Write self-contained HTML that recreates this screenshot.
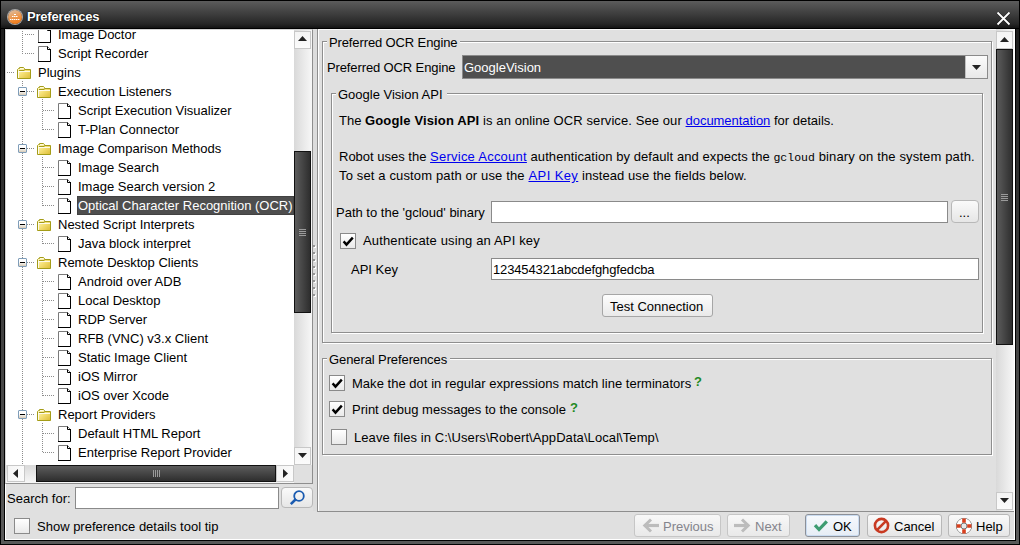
<!DOCTYPE html><html><head><meta charset="utf-8"><title>Preferences</title><style>
*{margin:0;padding:0;box-sizing:border-box}
html,body{width:1020px;height:545px;overflow:hidden;background:#000}
body{position:relative;font-family:"Liberation Sans",sans-serif;font-size:13px;color:#000}
div{position:absolute}
.t{white-space:nowrap;line-height:15px}
.dv{width:1px;background:repeating-linear-gradient(to bottom,#8c8c8c 0 1px,transparent 1px 2px)}
.dh{height:1px;background:repeating-linear-gradient(to right,#8c8c8c 0 1px,transparent 1px 2px)}
.etch{border:1px solid #8e8e8e;box-shadow:inset 1px 1px 0 #fff,1px 1px 0 #fff}
.btn{border:1px solid #a6a6a6;border-radius:3px;background:linear-gradient(#fdfdfd,#e9e9e9)}
.tf{border:1px solid #8a8a8a;background:#fff;box-shadow:inset 1px 1px 0 #f0f0f0}
.cb{width:16px;height:16px;border:1px solid #8a8a8a;background:linear-gradient(#fff,#e8e8e8)}
.sbbtn{border:1px solid #c4c4c4;background:linear-gradient(to right,#f0f0f0,#fafafa)}
.thumbv{border:1px solid #111;background:linear-gradient(to right,#5e5e5e,#2e2e2e)}
.thumbh{border:1px solid #111;background:linear-gradient(to bottom,#5e5e5e,#2e2e2e)}
.trackv{background:linear-gradient(to right,#d9d9d9,#f7f7f7)}
.trackh{background:linear-gradient(to bottom,#d9d9d9,#f7f7f7)}
a{color:#0000ee;text-decoration:underline}
</style></head><body>
<div style="left:1px;top:1px;width:1018px;height:27px;background:linear-gradient(#5c5c5c,#262626 85%,#141414)"></div>
<div style="left:1px;top:29px;width:3px;height:515px;background:linear-gradient(#1e1e1e,#5a5a5a)"></div>
<div style="left:1016px;top:29px;width:3px;height:515px;background:linear-gradient(#1e1e1e,#5a5a5a)"></div>
<div style="left:4px;top:541px;width:1012px;height:3px;background:#585858"></div>
<div style="left:5px;top:29px;width:1010px;height:511px;background:#e0e0e0;border-left:1px solid #fff;border-bottom:1px solid #fff;border-right:1px solid #fff"></div>
<div style="left:8px;top:10px;width:14px;height:14px;border-radius:50%;background:linear-gradient(160deg,#d9c4b0 0%,#e9a060 40%,#f08428 75%,#f07a18);box-shadow:0 0 0 1px #a8a8a8"></div>
<div style="left:14px;top:14px;width:2px;height:1px;background:#fff"></div>
<div style="left:12px;top:16px;width:6px;height:1px;background:repeating-linear-gradient(to right,#fff 0 1px,rgba(255,255,255,.5) 1px 2px)"></div>
<div style="left:10px;top:19px;width:10px;height:1px;background:repeating-linear-gradient(to right,#fff 0 1px,rgba(255,255,255,.4) 1px 2px)"></div>
<div class="t" style="left:27px;top:9px;line-height:15px;color:#fff;font-weight:bold;font-size:13px;letter-spacing:-0.2px;text-shadow:0 0 1px #000,0 0 2px #000">Preferences</div>
<svg style="position:absolute;left:996px;top:10.5px" width="15" height="15" viewBox="0 0 15 15"><path d="M1.5 1.5L13.5 13.5M13.5 1.5L1.5 13.5" stroke="#000" stroke-width="3" opacity=".5"/><path d="M1.5 1.5L13.5 13.5M13.5 1.5L1.5 13.5" stroke="#fff" stroke-width="1.8"/></svg>
<div style="left:5px;top:29px;width:308px;height:455px;background:#fff;border-top:1px solid #d4d4d4;border-left:1px solid #d4d4d4;border-right:1px solid #8e8e8e;border-bottom:1px solid #8e8e8e"></div>
<div style="left:6px;top:30px;width:288px;height:435px;overflow:hidden"><div style="left:-6px;top:-30px;width:300px;height:500px"><div class="dv" style="left:22px;top:29px;height:25px"></div><div class="dv" style="left:22px;top:81px;height:385px"></div><div class="dv" style="left:42px;top:99px;height:31px"></div><div class="dv" style="left:42px;top:157px;height:49px"></div><div class="dv" style="left:42px;top:233px;height:11px"></div><div class="dv" style="left:42px;top:271px;height:125px"></div><div class="dv" style="left:42px;top:423px;height:30px"></div><div class="dh" style="left:25px;top:34px;width:10px"></div><svg style="position:absolute;left:38px;top:27px" width="13" height="16" viewBox="0 0 13 16"><path d="M0.5 15.5V0.5H9.5L12.5 3.5V15.5Z" fill="#fff" stroke="#7a7a7a"/><path d="M12.5 3V15.5H0" stroke="#000" fill="none"/><path d="M9.5 0.5V3.5H12.5" stroke="#000" fill="none"/></svg><div class="t" style="left:58px;top:27px;line-height:15px;">Image Doctor</div><div class="dh" style="left:25px;top:53px;width:10px"></div><svg style="position:absolute;left:38px;top:46px" width="13" height="16" viewBox="0 0 13 16"><path d="M0.5 15.5V0.5H9.5L12.5 3.5V15.5Z" fill="#fff" stroke="#7a7a7a"/><path d="M12.5 3V15.5H0" stroke="#000" fill="none"/><path d="M9.5 0.5V3.5H12.5" stroke="#000" fill="none"/></svg><div class="t" style="left:58px;top:46px;line-height:15px;">Script Recorder</div><div class="dh" style="left:7px;top:72px;width:8px"></div><svg style="position:absolute;left:17px;top:67px" width="14" height="12" viewBox="0 0 14 12"><defs><linearGradient id="fg" x1="0" y1="0" x2="1" y2="1"><stop offset="0" stop-color="#fffbd8"/><stop offset=".45" stop-color="#f6e27a"/><stop offset="1" stop-color="#dcbc34"/></linearGradient></defs><path d="M0.5 11.5V2.5L1.5 1.5H2.5V0.5H6.5L7.5 1.5V2.5H13.5V11.5Z" fill="url(#fg)" stroke="#a49c18"/><path d="M2 3.5H7.5" stroke="#a49c18"/><path d="M3 1.5H6.5" stroke="#fffce0"/><path d="M1.5 4.5V11M1 4.5H13" stroke="#fff" opacity=".85"/></svg><div class="t" style="left:38px;top:65px;line-height:15px;">Plugins</div><div class="dh" style="left:27px;top:91px;width:8px"></div><div style="left:18px;top:87px;width:9px;height:9px;border:1px solid #7f9db9;border-radius:1px;background:linear-gradient(#fff 40%,#d8ccb8)"></div><div style="left:20px;top:91px;width:5px;height:1px;background:#000"></div><svg style="position:absolute;left:37px;top:86px" width="14" height="12" viewBox="0 0 14 12"><defs><linearGradient id="fg" x1="0" y1="0" x2="1" y2="1"><stop offset="0" stop-color="#fffbd8"/><stop offset=".45" stop-color="#f6e27a"/><stop offset="1" stop-color="#dcbc34"/></linearGradient></defs><path d="M0.5 11.5V2.5L1.5 1.5H2.5V0.5H6.5L7.5 1.5V2.5H13.5V11.5Z" fill="url(#fg)" stroke="#a49c18"/><path d="M2 3.5H7.5" stroke="#a49c18"/><path d="M3 1.5H6.5" stroke="#fffce0"/><path d="M1.5 4.5V11M1 4.5H13" stroke="#fff" opacity=".85"/></svg><div class="t" style="left:58px;top:84px;line-height:15px;">Execution Listeners</div><div class="dh" style="left:43px;top:110px;width:12px"></div><svg style="position:absolute;left:58px;top:103px" width="13" height="16" viewBox="0 0 13 16"><path d="M0.5 15.5V0.5H9.5L12.5 3.5V15.5Z" fill="#fff" stroke="#7a7a7a"/><path d="M12.5 3V15.5H0" stroke="#000" fill="none"/><path d="M9.5 0.5V3.5H12.5" stroke="#000" fill="none"/></svg><div class="t" style="left:78px;top:103px;line-height:15px;">Script Execution Visualizer</div><div class="dh" style="left:43px;top:129px;width:12px"></div><svg style="position:absolute;left:58px;top:122px" width="13" height="16" viewBox="0 0 13 16"><path d="M0.5 15.5V0.5H9.5L12.5 3.5V15.5Z" fill="#fff" stroke="#7a7a7a"/><path d="M12.5 3V15.5H0" stroke="#000" fill="none"/><path d="M9.5 0.5V3.5H12.5" stroke="#000" fill="none"/></svg><div class="t" style="left:78px;top:122px;line-height:15px;">T-Plan Connector</div><div class="dh" style="left:27px;top:148px;width:8px"></div><div style="left:18px;top:144px;width:9px;height:9px;border:1px solid #7f9db9;border-radius:1px;background:linear-gradient(#fff 40%,#d8ccb8)"></div><div style="left:20px;top:148px;width:5px;height:1px;background:#000"></div><svg style="position:absolute;left:37px;top:143px" width="14" height="12" viewBox="0 0 14 12"><defs><linearGradient id="fg" x1="0" y1="0" x2="1" y2="1"><stop offset="0" stop-color="#fffbd8"/><stop offset=".45" stop-color="#f6e27a"/><stop offset="1" stop-color="#dcbc34"/></linearGradient></defs><path d="M0.5 11.5V2.5L1.5 1.5H2.5V0.5H6.5L7.5 1.5V2.5H13.5V11.5Z" fill="url(#fg)" stroke="#a49c18"/><path d="M2 3.5H7.5" stroke="#a49c18"/><path d="M3 1.5H6.5" stroke="#fffce0"/><path d="M1.5 4.5V11M1 4.5H13" stroke="#fff" opacity=".85"/></svg><div class="t" style="left:58px;top:141px;line-height:15px;">Image Comparison Methods</div><div class="dh" style="left:43px;top:167px;width:12px"></div><svg style="position:absolute;left:58px;top:160px" width="13" height="16" viewBox="0 0 13 16"><path d="M0.5 15.5V0.5H9.5L12.5 3.5V15.5Z" fill="#fff" stroke="#7a7a7a"/><path d="M12.5 3V15.5H0" stroke="#000" fill="none"/><path d="M9.5 0.5V3.5H12.5" stroke="#000" fill="none"/></svg><div class="t" style="left:78px;top:160px;line-height:15px;">Image Search</div><div class="dh" style="left:43px;top:186px;width:12px"></div><svg style="position:absolute;left:58px;top:179px" width="13" height="16" viewBox="0 0 13 16"><path d="M0.5 15.5V0.5H9.5L12.5 3.5V15.5Z" fill="#fff" stroke="#7a7a7a"/><path d="M12.5 3V15.5H0" stroke="#000" fill="none"/><path d="M9.5 0.5V3.5H12.5" stroke="#000" fill="none"/></svg><div class="t" style="left:78px;top:179px;line-height:15px;">Image Search version 2</div><div class="dh" style="left:43px;top:205px;width:12px"></div><svg style="position:absolute;left:58px;top:198px" width="13" height="16" viewBox="0 0 13 16"><path d="M0.5 15.5V0.5H9.5L12.5 3.5V15.5Z" fill="#fff" stroke="#7a7a7a"/><path d="M12.5 3V15.5H0" stroke="#000" fill="none"/><path d="M9.5 0.5V3.5H12.5" stroke="#000" fill="none"/></svg><div style="left:77px;top:196px;width:217px;height:19px;background:#4e4e4e;border:1px solid #424242"></div><div class="t" style="left:78px;top:198px;line-height:15px;color:#fff">Optical Character Recognition (OCR)</div><div class="dh" style="left:27px;top:224px;width:8px"></div><div style="left:18px;top:220px;width:9px;height:9px;border:1px solid #7f9db9;border-radius:1px;background:linear-gradient(#fff 40%,#d8ccb8)"></div><div style="left:20px;top:224px;width:5px;height:1px;background:#000"></div><svg style="position:absolute;left:37px;top:219px" width="14" height="12" viewBox="0 0 14 12"><defs><linearGradient id="fg" x1="0" y1="0" x2="1" y2="1"><stop offset="0" stop-color="#fffbd8"/><stop offset=".45" stop-color="#f6e27a"/><stop offset="1" stop-color="#dcbc34"/></linearGradient></defs><path d="M0.5 11.5V2.5L1.5 1.5H2.5V0.5H6.5L7.5 1.5V2.5H13.5V11.5Z" fill="url(#fg)" stroke="#a49c18"/><path d="M2 3.5H7.5" stroke="#a49c18"/><path d="M3 1.5H6.5" stroke="#fffce0"/><path d="M1.5 4.5V11M1 4.5H13" stroke="#fff" opacity=".85"/></svg><div class="t" style="left:58px;top:217px;line-height:15px;">Nested Script Interprets</div><div class="dh" style="left:43px;top:243px;width:12px"></div><svg style="position:absolute;left:58px;top:236px" width="13" height="16" viewBox="0 0 13 16"><path d="M0.5 15.5V0.5H9.5L12.5 3.5V15.5Z" fill="#fff" stroke="#7a7a7a"/><path d="M12.5 3V15.5H0" stroke="#000" fill="none"/><path d="M9.5 0.5V3.5H12.5" stroke="#000" fill="none"/></svg><div class="t" style="left:78px;top:236px;line-height:15px;">Java block interpret</div><div class="dh" style="left:27px;top:262px;width:8px"></div><div style="left:18px;top:258px;width:9px;height:9px;border:1px solid #7f9db9;border-radius:1px;background:linear-gradient(#fff 40%,#d8ccb8)"></div><div style="left:20px;top:262px;width:5px;height:1px;background:#000"></div><svg style="position:absolute;left:37px;top:257px" width="14" height="12" viewBox="0 0 14 12"><defs><linearGradient id="fg" x1="0" y1="0" x2="1" y2="1"><stop offset="0" stop-color="#fffbd8"/><stop offset=".45" stop-color="#f6e27a"/><stop offset="1" stop-color="#dcbc34"/></linearGradient></defs><path d="M0.5 11.5V2.5L1.5 1.5H2.5V0.5H6.5L7.5 1.5V2.5H13.5V11.5Z" fill="url(#fg)" stroke="#a49c18"/><path d="M2 3.5H7.5" stroke="#a49c18"/><path d="M3 1.5H6.5" stroke="#fffce0"/><path d="M1.5 4.5V11M1 4.5H13" stroke="#fff" opacity=".85"/></svg><div class="t" style="left:58px;top:255px;line-height:15px;">Remote Desktop Clients</div><div class="dh" style="left:43px;top:281px;width:12px"></div><svg style="position:absolute;left:58px;top:274px" width="13" height="16" viewBox="0 0 13 16"><path d="M0.5 15.5V0.5H9.5L12.5 3.5V15.5Z" fill="#fff" stroke="#7a7a7a"/><path d="M12.5 3V15.5H0" stroke="#000" fill="none"/><path d="M9.5 0.5V3.5H12.5" stroke="#000" fill="none"/></svg><div class="t" style="left:78px;top:274px;line-height:15px;">Android over ADB</div><div class="dh" style="left:43px;top:300px;width:12px"></div><svg style="position:absolute;left:58px;top:293px" width="13" height="16" viewBox="0 0 13 16"><path d="M0.5 15.5V0.5H9.5L12.5 3.5V15.5Z" fill="#fff" stroke="#7a7a7a"/><path d="M12.5 3V15.5H0" stroke="#000" fill="none"/><path d="M9.5 0.5V3.5H12.5" stroke="#000" fill="none"/></svg><div class="t" style="left:78px;top:293px;line-height:15px;">Local Desktop</div><div class="dh" style="left:43px;top:319px;width:12px"></div><svg style="position:absolute;left:58px;top:312px" width="13" height="16" viewBox="0 0 13 16"><path d="M0.5 15.5V0.5H9.5L12.5 3.5V15.5Z" fill="#fff" stroke="#7a7a7a"/><path d="M12.5 3V15.5H0" stroke="#000" fill="none"/><path d="M9.5 0.5V3.5H12.5" stroke="#000" fill="none"/></svg><div class="t" style="left:78px;top:312px;line-height:15px;">RDP Server</div><div class="dh" style="left:43px;top:338px;width:12px"></div><svg style="position:absolute;left:58px;top:331px" width="13" height="16" viewBox="0 0 13 16"><path d="M0.5 15.5V0.5H9.5L12.5 3.5V15.5Z" fill="#fff" stroke="#7a7a7a"/><path d="M12.5 3V15.5H0" stroke="#000" fill="none"/><path d="M9.5 0.5V3.5H12.5" stroke="#000" fill="none"/></svg><div class="t" style="left:78px;top:331px;line-height:15px;">RFB (VNC) v3.x Client</div><div class="dh" style="left:43px;top:357px;width:12px"></div><svg style="position:absolute;left:58px;top:350px" width="13" height="16" viewBox="0 0 13 16"><path d="M0.5 15.5V0.5H9.5L12.5 3.5V15.5Z" fill="#fff" stroke="#7a7a7a"/><path d="M12.5 3V15.5H0" stroke="#000" fill="none"/><path d="M9.5 0.5V3.5H12.5" stroke="#000" fill="none"/></svg><div class="t" style="left:78px;top:350px;line-height:15px;">Static Image Client</div><div class="dh" style="left:43px;top:376px;width:12px"></div><svg style="position:absolute;left:58px;top:369px" width="13" height="16" viewBox="0 0 13 16"><path d="M0.5 15.5V0.5H9.5L12.5 3.5V15.5Z" fill="#fff" stroke="#7a7a7a"/><path d="M12.5 3V15.5H0" stroke="#000" fill="none"/><path d="M9.5 0.5V3.5H12.5" stroke="#000" fill="none"/></svg><div class="t" style="left:78px;top:369px;line-height:15px;">iOS Mirror</div><div class="dh" style="left:43px;top:395px;width:12px"></div><svg style="position:absolute;left:58px;top:388px" width="13" height="16" viewBox="0 0 13 16"><path d="M0.5 15.5V0.5H9.5L12.5 3.5V15.5Z" fill="#fff" stroke="#7a7a7a"/><path d="M12.5 3V15.5H0" stroke="#000" fill="none"/><path d="M9.5 0.5V3.5H12.5" stroke="#000" fill="none"/></svg><div class="t" style="left:78px;top:388px;line-height:15px;">iOS over Xcode</div><div class="dh" style="left:27px;top:414px;width:8px"></div><div style="left:18px;top:410px;width:9px;height:9px;border:1px solid #7f9db9;border-radius:1px;background:linear-gradient(#fff 40%,#d8ccb8)"></div><div style="left:20px;top:414px;width:5px;height:1px;background:#000"></div><svg style="position:absolute;left:37px;top:409px" width="14" height="12" viewBox="0 0 14 12"><defs><linearGradient id="fg" x1="0" y1="0" x2="1" y2="1"><stop offset="0" stop-color="#fffbd8"/><stop offset=".45" stop-color="#f6e27a"/><stop offset="1" stop-color="#dcbc34"/></linearGradient></defs><path d="M0.5 11.5V2.5L1.5 1.5H2.5V0.5H6.5L7.5 1.5V2.5H13.5V11.5Z" fill="url(#fg)" stroke="#a49c18"/><path d="M2 3.5H7.5" stroke="#a49c18"/><path d="M3 1.5H6.5" stroke="#fffce0"/><path d="M1.5 4.5V11M1 4.5H13" stroke="#fff" opacity=".85"/></svg><div class="t" style="left:58px;top:407px;line-height:15px;">Report Providers</div><div class="dh" style="left:43px;top:433px;width:12px"></div><svg style="position:absolute;left:58px;top:426px" width="13" height="16" viewBox="0 0 13 16"><path d="M0.5 15.5V0.5H9.5L12.5 3.5V15.5Z" fill="#fff" stroke="#7a7a7a"/><path d="M12.5 3V15.5H0" stroke="#000" fill="none"/><path d="M9.5 0.5V3.5H12.5" stroke="#000" fill="none"/></svg><div class="t" style="left:78px;top:426px;line-height:15px;">Default HTML Report</div><div class="dh" style="left:43px;top:452px;width:12px"></div><svg style="position:absolute;left:58px;top:445px" width="13" height="16" viewBox="0 0 13 16"><path d="M0.5 15.5V0.5H9.5L12.5 3.5V15.5Z" fill="#fff" stroke="#7a7a7a"/><path d="M12.5 3V15.5H0" stroke="#000" fill="none"/><path d="M9.5 0.5V3.5H12.5" stroke="#000" fill="none"/></svg><div class="t" style="left:78px;top:445px;line-height:15px;">Enterprise Report Provider</div></div></div>
<div style="left:294px;top:30px;width:18px;height:435px;background:linear-gradient(to right,#d9d9d9,#f7f7f7)"></div>
<div style="left:294px;top:31px;width:17px;height:18px;border:1px solid #c8c8c8;background:linear-gradient(#f4f4f4,#fbfbfb)"></div>
<svg style="position:absolute;left:298px;top:36px" width="9" height="5"><path d="M0 5L4.5 0L9 5Z" fill="#222"/></svg>
<div style="left:294px;top:447px;width:17px;height:18px;border:1px solid #c8c8c8;background:linear-gradient(#f4f4f4,#fbfbfb)"></div>
<svg style="position:absolute;left:298px;top:453px" width="9" height="5"><path d="M0 0L4.5 5L9 0Z" fill="#222"/></svg>
<div style="left:294px;top:151px;width:17px;height:162px;border:1px solid #111;background:linear-gradient(to right,#5c5c5c,#2e2e2e)"></div>
<div style="left:299px;top:229px;width:7px;height:1px;background:#9a9a9a"></div>
<div style="left:299px;top:231px;width:7px;height:1px;background:#9a9a9a"></div>
<div style="left:299px;top:233px;width:7px;height:1px;background:#9a9a9a"></div>
<div style="left:299px;top:235px;width:7px;height:1px;background:#9a9a9a"></div>
<div style="left:6px;top:465px;width:288px;height:18px;background:linear-gradient(#d9d9d9,#f7f7f7)"></div>
<div style="left:7px;top:465px;width:18px;height:17px;border:1px solid #c8c8c8;background:linear-gradient(to right,#f4f4f4,#fbfbfb)"></div>
<svg style="position:absolute;left:13px;top:469px" width="5" height="9"><path d="M5 0L0 4.5L5 9Z" fill="#222"/></svg>
<div style="left:276px;top:465px;width:18px;height:17px;border:1px solid #c8c8c8;background:linear-gradient(to right,#f4f4f4,#fbfbfb)"></div>
<svg style="position:absolute;left:283px;top:469px" width="5" height="9"><path d="M0 0L5 4.5L0 9Z" fill="#222"/></svg>
<div style="left:36px;top:465px;width:240px;height:17px;border:1px solid #111;background:linear-gradient(#5c5c5c,#2e2e2e)"></div>
<div style="left:153px;top:470px;width:1px;height:7px;background:#9a9a9a"></div>
<div style="left:155px;top:470px;width:1px;height:7px;background:#9a9a9a"></div>
<div style="left:157px;top:470px;width:1px;height:7px;background:#9a9a9a"></div>
<div style="left:159px;top:470px;width:1px;height:7px;background:#9a9a9a"></div>
<div style="left:294px;top:465px;width:18px;height:18px;background:#e0e0e0"></div>
<div style="left:313px;top:29px;width:4px;height:482px;background:#dcdcdc"></div>
<div style="left:314px;top:246px;width:2px;height:2px;background:#fff"></div>
<div style="left:313px;top:245px;width:2px;height:2px;background:#959595"></div>
<div style="left:314px;top:253px;width:2px;height:2px;background:#fff"></div>
<div style="left:313px;top:252px;width:2px;height:2px;background:#959595"></div>
<div style="left:314px;top:260px;width:2px;height:2px;background:#fff"></div>
<div style="left:313px;top:259px;width:2px;height:2px;background:#959595"></div>
<div style="left:314px;top:267px;width:2px;height:2px;background:#fff"></div>
<div style="left:313px;top:266px;width:2px;height:2px;background:#959595"></div>
<div style="left:314px;top:274px;width:2px;height:2px;background:#fff"></div>
<div style="left:313px;top:273px;width:2px;height:2px;background:#959595"></div>
<div style="left:314px;top:281px;width:2px;height:2px;background:#fff"></div>
<div style="left:313px;top:280px;width:2px;height:2px;background:#959595"></div>
<div style="left:314px;top:288px;width:2px;height:2px;background:#fff"></div>
<div style="left:313px;top:287px;width:2px;height:2px;background:#959595"></div>
<div style="left:314px;top:295px;width:2px;height:2px;background:#fff"></div>
<div style="left:313px;top:294px;width:2px;height:2px;background:#959595"></div>
<div class="t" style="left:7px;top:491px;line-height:15px;">Search for:</div>
<div style="left:75px;top:487px;width:204px;height:22px;border:1px solid #8a8a8a;background:#fff"></div>
<div style="left:281px;top:487px;width:32px;height:21px;border:1px solid #b8b8b8;border-radius:4px;background:linear-gradient(#fafafa,#e6e6e6)"></div>
<svg style="position:absolute;left:289px;top:489px" width="18" height="18" viewBox="0 0 18 18"><circle cx="10" cy="7" r="4.8" fill="none" stroke="#1a5bb0" stroke-width="1.8"/><path d="M7 10L1.8 15.2" stroke="#1a5bb0" stroke-width="2.6"/></svg>
<div style="left:14px;top:518px;width:16px;height:16px;border:1px solid #8a8a8a;background:linear-gradient(#fff,#e9e9e9)"></div>
<div class="t" style="left:37px;top:519px;line-height:15px;">Show preference details tool tip</div>
<div style="left:317px;top:29px;width:697px;height:483px;border-left:1px solid #8e8e8e;border-bottom:1px solid #8e8e8e;background:#e0e0e0"></div>
<div style="left:318px;top:29px;width:1px;height:482px;background:#fff"></div>
<div style="left:318px;top:29px;width:678px;height:1px;background:#f8f8f8"></div>
<div style="left:996px;top:29px;width:18px;height:482px;background:linear-gradient(to right,#d9d9d9,#f7f7f7)"></div>
<div style="left:996px;top:31px;width:17px;height:18px;border:1px solid #c8c8c8;background:linear-gradient(#f4f4f4,#fbfbfb)"></div>
<svg style="position:absolute;left:1000px;top:37px" width="9" height="5"><path d="M0 5L4.5 0L9 5Z" fill="#222"/></svg>
<div style="left:996px;top:49px;width:17px;height:296px;border:1px solid #111;background:linear-gradient(to right,#5c5c5c,#2e2e2e)"></div>
<div style="left:1001px;top:194px;width:7px;height:1px;background:#9a9a9a"></div>
<div style="left:1001px;top:196px;width:7px;height:1px;background:#9a9a9a"></div>
<div style="left:1001px;top:198px;width:7px;height:1px;background:#9a9a9a"></div>
<div style="left:1001px;top:200px;width:7px;height:1px;background:#9a9a9a"></div>
<div style="left:996px;top:492px;width:17px;height:18px;border:1px solid #c8c8c8;background:linear-gradient(#f4f4f4,#fbfbfb)"></div>
<svg style="position:absolute;left:1000px;top:498px" width="9" height="5"><path d="M0 0L4.5 5L9 0Z" fill="#222"/></svg>
<div class="etch" style="left:322px;top:41px;width:670px;height:302px;"></div>
<div style="left:327px;top:35px;width:133px;height:14px;background:#e0e0e0"></div>
<div class="t" style="left:329px;top:35px;line-height:15px;letter-spacing:-.12px">Preferred OCR Engine</div>
<div class="t" style="left:327px;top:60px;line-height:15px;letter-spacing:-.12px">Preferred OCR Engine</div>
<div style="left:462px;top:55px;width:526px;height:24px;border:1px solid #8a8a8a;background:#4f4f4f"></div>
<div class="t" style="left:464px;top:60px;line-height:15px;color:#fff">GoogleVision</div>
<div style="left:965px;top:56px;width:22px;height:22px;border-left:1px solid #c0c0c0;background:linear-gradient(#fbfbfb,#e8e8e8)"></div>
<svg style="position:absolute;left:972px;top:65px" width="9" height="5"><path d="M0 0L4.5 5L9 0Z" fill="#222"/></svg>
<div class="etch" style="left:331px;top:93px;width:652px;height:240px;"></div>
<div style="left:336px;top:87px;width:111px;height:14px;background:#e0e0e0"></div>
<div class="t" style="left:338px;top:87px;line-height:15px;">Google Vision API</div>
<div class="t" style="left:339px;top:113px;line-height:15px;">The <b style="letter-spacing:.14px">Google Vision API</b><span style="letter-spacing:.09px"> is an online OCR service. See our </span><a style="letter-spacing:-.04px">documentation</a> for details.</div>
<div class="t" style="left:339px;top:149px;line-height:15px;">Robot uses the <a style="letter-spacing:.24px">Service Account</a><span style="letter-spacing:.07px"> authentication by default and expects the </span><span style="font-family:'Liberation Mono';font-size:11.5px">gcloud</span><span style="letter-spacing:.14px"> binary on the system path.</span></div>
<div class="t" style="left:339px;top:168px;line-height:15px;"><span style="letter-spacing:.14px">To set a custom path or use the </span><a style="letter-spacing:.4px">API Key</a><span style="letter-spacing:.07px"> instead use the fields below.</span></div>
<div class="t" style="left:336px;top:205px;line-height:15px;">Path to the 'gcloud' binary</div>
<div style="left:491px;top:201px;width:457px;height:22px;border:1px solid #8a8a8a;background:#fff"></div>
<div style="left:951px;top:200px;width:28px;height:23px;border:1px solid #b8b8b8;border-radius:4px;background:linear-gradient(#fafafa,#e6e6e6)"></div>
<div class="t" style="left:959px;top:205px;line-height:15px;">...</div>
<div style="left:340px;top:233px;width:16px;height:16px;border:1px solid #8a8a8a;background:linear-gradient(#fff,#e9e9e9)"></div>
<svg style="position:absolute;left:342px;top:235px" width="12" height="12"><path d="M1.6 6.4L4.5 9.6L10.8 2.6" fill="none" stroke="#000" stroke-width="2.4"/></svg>
<div class="t" style="left:363px;top:233px;line-height:15px;letter-spacing:.14px">Authenticate using an API key</div>
<div class="t" style="left:351px;top:262px;line-height:15px;">API Key</div>
<div style="left:491px;top:258px;width:488px;height:22px;border:1px solid #8a8a8a;background:#fff"></div>
<div class="t" style="left:493px;top:262px;line-height:15px;letter-spacing:-.14px">123454321abcdefghgfedcba</div>
<div style="left:602px;top:294px;width:111px;height:23px;border:1px solid #a6a6a6;border-radius:3px;background:linear-gradient(#fdfdfd,#e9e9e9)"></div>
<div class="t" style="left:610px;top:299px;line-height:15px;">Test Connection</div>
<div class="etch" style="left:322px;top:358px;width:670px;height:97px;"></div>
<div style="left:327px;top:352px;width:123px;height:14px;background:#e0e0e0"></div>
<div class="t" style="left:329px;top:352px;line-height:15px;letter-spacing:-.1px">General Preferences</div>
<div style="left:329px;top:375px;width:16px;height:16px;border:1px solid #8a8a8a;background:linear-gradient(#fff,#e9e9e9)"></div>
<svg style="position:absolute;left:331px;top:377px" width="12" height="12"><path d="M1.6 6.4L4.5 9.6L10.8 2.6" fill="none" stroke="#000" stroke-width="2.4"/></svg>
<div class="t" style="left:352px;top:376px;line-height:15px;letter-spacing:.03px">Make the dot in regular expressions match line terminators</div>
<div class="t" style="left:694px;top:374px;line-height:15px;color:#1f8a1f;font-weight:bold;font-size:13px">?</div>
<div style="left:329px;top:401px;width:16px;height:16px;border:1px solid #8a8a8a;background:linear-gradient(#fff,#e9e9e9)"></div>
<svg style="position:absolute;left:331px;top:403px" width="12" height="12"><path d="M1.6 6.4L4.5 9.6L10.8 2.6" fill="none" stroke="#000" stroke-width="2.4"/></svg>
<div class="t" style="left:352px;top:402px;line-height:15px;">Print debug messages to the console</div>
<div class="t" style="left:570px;top:400px;line-height:15px;color:#1f8a1f;font-weight:bold;font-size:13px">?</div>
<div style="left:331px;top:429px;width:16px;height:16px;border:1px solid #8a8a8a;background:linear-gradient(#fff,#e9e9e9)"></div>
<div class="t" style="left:354px;top:430px;line-height:15px;letter-spacing:.08px">Leave files in C:\Users\Robert\AppData\Local\Temp\</div>
<div style="left:634px;top:514px;width:87px;height:23px;border:1px solid #c6c6c6;border-radius:3px;background:linear-gradient(#f8f8f8,#e9e9e9)"></div>
<svg style="position:absolute;left:642px;top:518px" width="18" height="15" viewBox="0 0 18 15"><path d="M17 7.5H5" stroke="#bcbcbc" stroke-width="3.2"/><path d="M9 1.5L2.8 7.5L9 13.5" fill="none" stroke="#bcbcbc" stroke-width="3"/></svg>
<div class="t" style="left:663px;top:519px;line-height:15px;color:#84848c">Previous</div>
<div style="left:727px;top:514px;width:63px;height:23px;border:1px solid #c6c6c6;border-radius:3px;background:linear-gradient(#f8f8f8,#e9e9e9)"></div>
<svg style="position:absolute;left:734px;top:518px" width="18" height="15" viewBox="0 0 18 15"><path d="M0 7.5H12" stroke="#bcbcbc" stroke-width="3.2"/><path d="M8 1.5L14.2 7.5L8 13.5" fill="none" stroke="#bcbcbc" stroke-width="3"/></svg>
<div class="t" style="left:755px;top:519px;line-height:15px;color:#84848c">Next</div>
<div style="left:805px;top:514px;width:55px;height:23px;border:1px solid #8c9098;border-radius:3px;background:linear-gradient(#f6f9fd,#e6edf5);box-shadow:inset 0 0 0 1px #c9dbf0"></div>
<svg style="position:absolute;left:813px;top:519px" width="16" height="14" viewBox="0 0 16 14"><path d="M0.8 7.2L3.2 5L6 8.2L12.6 1.2L15 3.6L6 12.8Z" fill="#3d9c72"/></svg>
<div class="t" style="left:833px;top:519px;line-height:15px;">OK</div>
<div style="left:867px;top:514px;width:75px;height:23px;border:1px solid #b8b8b8;border-radius:3px;background:linear-gradient(#fafafa,#e6e6e6)"></div>
<svg style="position:absolute;left:873px;top:517px" width="17" height="17" viewBox="0 0 17 17"><circle cx="8.5" cy="8.5" r="6.6" fill="none" stroke="#c83a22" stroke-width="2.6"/><path d="M4.2 12.8L12.8 4.2" stroke="#c83a22" stroke-width="2.6"/></svg>
<div class="t" style="left:894px;top:519px;line-height:15px;">Cancel</div>
<div style="left:948px;top:514px;width:62px;height:23px;border:1px solid #b8b8b8;border-radius:3px;background:linear-gradient(#fafafa,#e6e6e6)"></div>
<svg style="position:absolute;left:955px;top:517px" width="18" height="18" viewBox="0 0 18 18"><circle cx="9" cy="9" r="7.6" fill="#fff" stroke="#666" stroke-width="1"/><circle cx="9" cy="9" r="5.6" fill="none" stroke="#fff" stroke-width="3.6"/><circle cx="9" cy="9" r="3" fill="#e8e8e8" stroke="#777" stroke-width="1"/><path d="M7.2 1.6H10.8V5.8H7.2ZM7.2 12.2H10.8V16.4H7.2ZM1.6 7.2H5.8V10.8H1.6ZM12.2 7.2H16.4V10.8H12.2Z" fill="#d8401e"/></svg>
<div class="t" style="left:976px;top:519px;line-height:15px;">Help</div>
</body></html>
